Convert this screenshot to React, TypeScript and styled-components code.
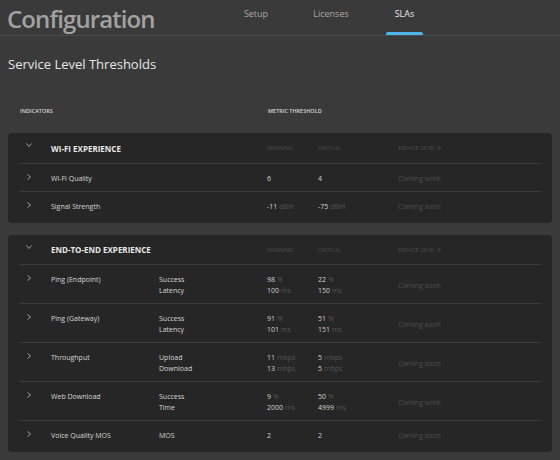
import React from "react";
import styled, { createGlobalStyle } from "styled-components";

const Global = createGlobalStyle`
  html, body { margin: 0; padding: 0; background: #3a3a3a; }
  body { font-family: "Open Sans", "Noto Sans", sans-serif; color: #d8d8d8; }
  * { box-sizing: border-box; }
`;

const Page = styled.div`
  width: 560px;
  height: 460px;
  overflow: hidden;
  background: #3a3a3a;
`;

const Header = styled.header`
  height: 36px;
  border-bottom: 1px solid #4b4b4b;
  display: flex;
  align-items: flex-end;
  padding-left: 7px;
`;

const AppTitle = styled.h1`
  margin: 0;
  font-family: "Open Sans", "Noto Sans", sans-serif;
  font-size: 24px;
  font-weight: 600;
  letter-spacing: -0.9px;
  color: #a2a2a2;
  line-height: 33px;
  width: 225px;
`;

const Tabs = styled.nav`
  display: flex;
  height: 35px;
`;

const Tab = styled.div<{ $active?: boolean; $w: number; $ml?: number }>`
  width: ${(p) => p.$w}px;
  margin-left: ${(p) => p.$ml ?? 0}px;
  display: flex;
  justify-content: center;
  padding-top: 7px;
  font-size: 9px;
  color: ${(p) => (p.$active ? "#e8e8e8" : "#a6a6a6")};
  position: relative;
  &::after {
    content: "";
    display: ${(p) => (p.$active ? "block" : "none")};
    position: absolute;
    left: 0;
    right: 0;
    bottom: 0;
    height: 3px;
    border-radius: 2px 2px 0 0;
    background: #4fb4ea;
  }
`;

const Content = styled.main`
  padding: 0 8px;
`;

const SectionTitle = styled.h2`
  margin: 0;
  padding-top: 19px;
  font-size: 13px;
  font-weight: 400;
  color: #e6e6e6;
  line-height: 18px;
`;

const ColumnLabels = styled.div`
  display: grid;
  grid-template-columns: 248px 1fr;
  padding: 34px 12px 18px;
  font-size: 5.5px;
  font-weight: 600;
  color: #d8d8d8;
  line-height: 8px;
`;

const Card = styled.section`
  background: #262626;
  border-radius: 4px;
  padding: 0 11px 3px 12px;
  margin-bottom: 12px;
`;

const grid = `
  display: grid;
  grid-template-columns: 31px 108px 108px 51px 80px 1fr;
`;

const HeadRow = styled.div<{ $h: number }>`
  ${grid}
  height: ${(p) => p.$h}px;
  align-items: center;
  border-bottom: 1px solid #3c3c3c;
`;

const GroupName = styled.div`
  grid-column: 2 / 4;
  font-size: 8px;
  font-weight: 700;
  color: #e8e8e8;
`;

const ColLabel = styled.div`
  font-size: 5.5px;
  color: #4c4c4c;
  text-transform: uppercase;
`;

const Row = styled.div<{ $last?: boolean }>`
  ${grid}
  padding: 9px 0 ${(p) => (p.$last ? 8 : 7)}px;
  border-bottom: ${(p) => (p.$last ? "none" : "1px solid #3c3c3c")};
  font-size: 7px;
  line-height: 11px;
  color: #d6d6d6;
`;

const Chevron = styled.svg<{ $down?: boolean }>`
  width: 6px;
  height: 6px;
  margin: ${(p) => (p.$down ? "-6px 0 0 6px" : "1px 0 0 6px")};
`;

const Cell = styled.div`
  display: flex;
  flex-direction: column;
`;

const Value = styled.span`
  color: #d2d2d2;
`;

const Unit = styled.span`
  color: #555;
  margin-left: 2px;
`;

const Soon = styled.div`
  color: #4e4e4e;
  align-self: center;
`;

const ChevronIcon = ({ down }: { down?: boolean }) => (
  <Chevron $down={down} viewBox="0 0 6 6">
    {down ? (
      <path d="M0.5 1.5 L3 4.5 L5.5 1.5" fill="none" stroke="#bdbdbd" strokeWidth="0.8" />
    ) : (
      <path d="M1.5 0.5 L4.5 3 L1.5 5.5" fill="none" stroke="#bdbdbd" strokeWidth="0.8" />
    )}
  </Chevron>
);

type Metric = { name: string; w: [string, string]; c: [string, string] };
type Item = { name: string; metrics: Metric[] };

const wifi: Item[] = [
  { name: "Wi-Fi Quality", metrics: [{ name: "", w: ["6", ""], c: ["4", ""] }] },
  { name: "Signal Strength", metrics: [{ name: "", w: ["-11", "dBm"], c: ["-75", "dBm"] }] },
];

const e2e: Item[] = [
  {
    name: "Ping (Endpoint)",
    metrics: [
      { name: "Success", w: ["98", "%"], c: ["22", "%"] },
      { name: "Latency", w: ["100", "ms"], c: ["150", "ms"] },
    ],
  },
  {
    name: "Ping (Gateway)",
    metrics: [
      { name: "Success", w: ["91", "%"], c: ["51", "%"] },
      { name: "Latency", w: ["101", "ms"], c: ["151", "ms"] },
    ],
  },
  {
    name: "Throughput",
    metrics: [
      { name: "Upload", w: ["11", "mbps"], c: ["5", "mbps"] },
      { name: "Download", w: ["13", "mbps"], c: ["5", "mbps"] },
    ],
  },
  {
    name: "Web Download",
    metrics: [
      { name: "Success", w: ["9", "%"], c: ["50", "%"] },
      { name: "Time", w: ["2000", "ms"], c: ["4999", "ms"] },
    ],
  },
  { name: "Voice Quality MOS", metrics: [{ name: "MOS", w: ["2", ""], c: ["2", ""] }] },
];

const Group = ({ title, items, headH }: { title: string; items: Item[]; headH: number }) => (
  <Card>
    <HeadRow $h={headH}>
      <ChevronIcon down />
      <GroupName>{title}</GroupName>
      <ColLabel>Warning</ColLabel>
      <ColLabel>Critical</ColLabel>
      <ColLabel>Service Level %</ColLabel>
    </HeadRow>
    {items.map((it, i) => (
      <Row key={it.name} $last={i === items.length - 1}>
        <ChevronIcon />
        <div>{it.name}</div>
        <Cell>
          {it.metrics.map((m, j) => (
            <span key={j}>{m.name || "\u00a0"}</span>
          ))}
        </Cell>
        <Cell>
          {it.metrics.map((m, j) => (
            <span key={j}>
              <Value>{m.w[0]}</Value>
              {m.w[1] && <Unit>{m.w[1]}</Unit>}
            </span>
          ))}
        </Cell>
        <Cell>
          {it.metrics.map((m, j) => (
            <span key={j}>
              <Value>{m.c[0]}</Value>
              {m.c[1] && <Unit>{m.c[1]}</Unit>}
            </span>
          ))}
        </Cell>
        <Soon>Coming soon</Soon>
      </Row>
    ))}
  </Card>
);

export default function App() {
  return (
    <Page>
      <Global />
      <Header>
        <AppTitle>Configuration</AppTitle>
        <Tabs>
          <Tab $w={48}>Setup</Tab>
          <Tab $w={102}>Licenses</Tab>
          <Tab $w={37} $ml={4} $active>SLAs</Tab>
        </Tabs>
      </Header>
      <Content>
        <SectionTitle>Service Level Thresholds</SectionTitle>
        <ColumnLabels>
          <span>INDICATORS</span>
          <span>METRIC THRESHOLD</span>
        </ColumnLabels>
        <Group title="WI-FI EXPERIENCE" items={wifi} headH={31} />
        <Group title="END-TO-END EXPERIENCE" items={e2e} headH={30} />
      </Content>
    </Page>
  );
}
